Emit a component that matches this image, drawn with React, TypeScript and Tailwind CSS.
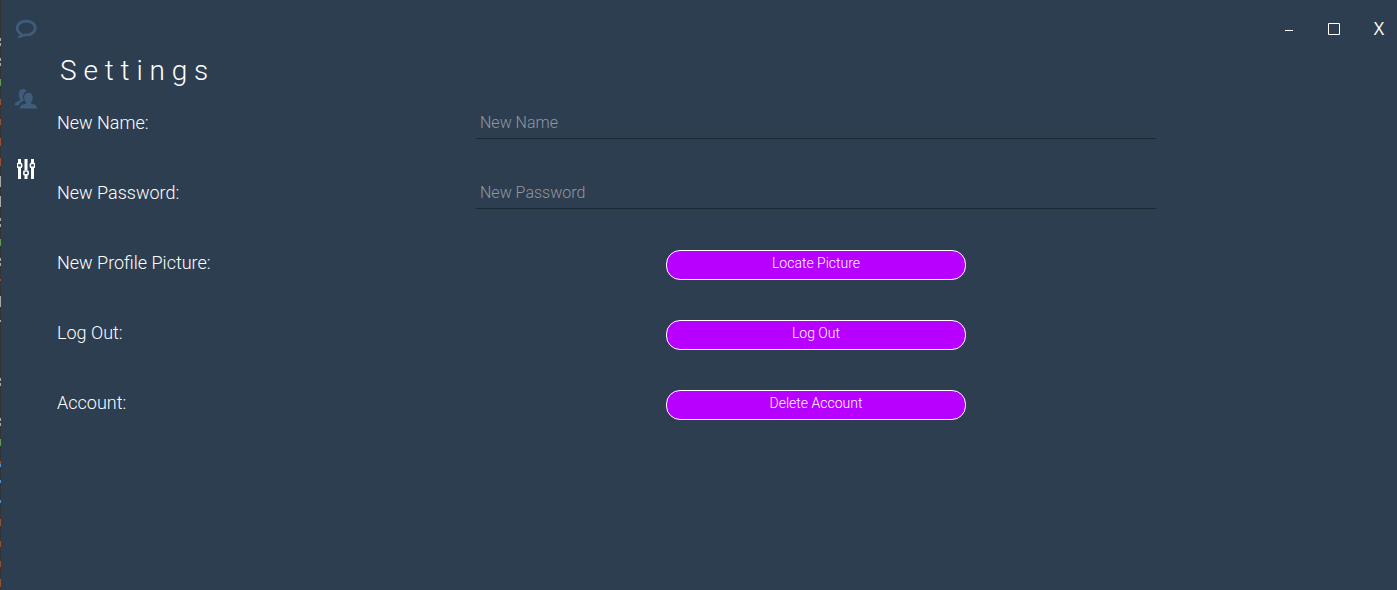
import type { ReactNode } from 'react';

function ChatIcon() {
  return (
    <svg width="22" height="20" viewBox="0 0 22 20" aria-hidden="true">
      <path fill="none" stroke="currentColor" strokeWidth="2.700" d="M6.200 15C3.600 13.700 2.200 11.500 2.200 9.100 2.200 5 6 2.200 11.200 2.200S20.200 5 20.200 9.100 16.400 16 11.200 16c-.9 0-1.600-.1-2.400-.2" />
      <path fill="currentColor" d="M5 13.500l5 2.200c-1.500 2.200-4 3.600-8 3.300 1.700-1.200 2.900-2.800 3-5.500Z" />
    </svg>
  );
}

function PeopleIcon() {
  return (
    <svg width="24" height="22" viewBox="0 0 24 22" fill="currentColor" aria-hidden="true">
      <path d="M9.200 1C11 1 12.200 1.700 12.700 3 10.300 4 9 6 9 8.700c0 1.600.5 2.900 1.200 3.900-2.600.700-4.300 2.200-5.400 4.600H0.500c.3-2.800 2.300-3.800 5.600-4.700v-1.500C5.200 9.600 4.700 7.800 4.800 5.700 4.900 2.800 6.500 1 9.200 1Z" />
      <path d="M14.500 4.800c2.700 0 4.300 1.900 4.300 4.600 0 2-.7 3.800-1.900 4.800v1.300c3.800.700 6.100 1.900 6.400 5H5.700c.3-3.100 2.600-4.300 6.400-5v-1.300c-1.200-1-1.900-2.800-1.900-4.800 0-2.700 1.600-4.600 4.300-4.600Z" />
    </svg>
  );
}

function SlidersIcon() {
  return (
    <svg width="18" height="20" viewBox="0 0 18 20" aria-hidden="true">
      <path fill="none" stroke="currentColor" strokeWidth="3" d="M2.500 0v4M2.500 9v11M9 0v11M9 16v4M15.500 0v4M15.500 9v11" />
      <g fill="none" stroke="currentColor" strokeWidth="1.600">
        <rect x="0.400" y="4.500" width="4.200" height="3.800" rx="0.800" />
        <rect x="6.900" y="12" width="4.200" height="3.800" rx="0.800" />
        <rect x="13.400" y="4.500" width="4.200" height="3.800" rx="0.800" />
      </g>
    </svg>
  );
}

function BackdropEdge() {
  return (
    <svg className="w-px shrink-0 self-stretch bg-[#343434]" aria-hidden="true">
      <path stroke="#a8a8a8" strokeWidth="2" d="M0 38v3M0 43v3M0 58v3M0 63v3M0 176v11M0 196v11M0 218v3M0 224v3M0 258v3M0 263v3M0 296v11M0 320v2M0 378v3M0 383v3M0 418v3M0 423v3" />
      <path stroke="#629a4e" strokeWidth="2" d="M0 79v7M0 239v7M0 439v7" />
      <path stroke="#96502e" strokeWidth="2" d="M0 99v6M0 119v6M0 138v8M0 158v8M0 279v2M0 461v3M0 519v7M0 541v6M0 561v6M0 579v8" />
      <path stroke="#568bc4" strokeWidth="2" d="M0 464v3M0 480v3M0 500v3" />
    </svg>
  );
}

function NavButton({ label, active = false, children }: { label: string; active?: boolean; children: ReactNode }) {
  return (
    <button
      type="button"
      aria-label={label}
      aria-current={active ? 'page' : undefined}
      className={`flex h-10 w-full items-center justify-center ${active ? 'text-white' : 'text-[#3f5c7b]'}`}
    >
      {children}
    </button>
  );
}

const rowClass = 'grid h-[70px] grid-cols-[419fr_680fr_241fr] items-center';
const labelClass = 'pt-0.5 text-lg text-white';

function FieldRow({ id, type, name }: { id: string; type: string; name: string }) {
  return (
    <div className={rowClass}>
      <label htmlFor={id} className={labelClass}>{name}:</label>
      <input
        id={id}
        type={type}
        placeholder={name}
        className="h-[34px] w-full border-b border-[#1b2733] bg-transparent px-1 pt-0.5 text-base text-white outline-none placeholder:text-[#8f98a2]"
      />
    </div>
  );
}

function ActionRow({ id, label, action }: { id: string; label: string; action: string }) {
  return (
    <div className={rowClass}>
      <label htmlFor={id} className={labelClass}>{label}</label>
      <div className="flex justify-center pt-[6px]">
        <button id={id} type="button" className="flex h-[30px] w-[300px] items-center justify-center rounded-[14px] border border-white bg-[#b700ff] pb-1 text-sm text-white">
          {action}
        </button>
      </div>
    </div>
  );
}

export default function App() {
  return (
    <div className="flex min-h-screen bg-[#2d3e50] font-['Roboto',sans-serif] font-light">
      <BackdropEdge />
      <nav aria-label="Main" className="flex w-[50px] shrink-0 flex-col gap-[30px] pt-[9px]">
        <NavButton label="Chat"><ChatIcon /></NavButton>
        <NavButton label="Contacts"><PeopleIcon /></NavButton>
        <NavButton label="Settings" active><SlidersIcon /></NavButton>
      </nav>
      <main className="min-w-0 flex-1">
        <header className="flex h-[87px] items-start justify-between pl-[9px]">
          <h1 className="pt-[55px] text-[28px] leading-8 text-white">S e t t i n g s</h1>
          <div className="flex gap-[9px] pt-[11px] text-white">
            <button type="button" aria-label="Minimize" className="flex h-9 w-9 items-center justify-center">
              <svg width="8" height="12" aria-hidden="true"><path fill="currentColor" d="M0 7h8v1H0z" /></svg>
            </button>
            <button type="button" aria-label="Maximize" className="flex h-9 w-9 items-center justify-center">
              <svg width="12" height="12" aria-hidden="true"><path fill="none" stroke="currentColor" d="M.5.5h11v11H.5z" /></svg>
            </button>
            <button type="button" aria-label="Close" className="flex h-9 w-9 items-center justify-center pb-0.5 font-['Open_Sans',sans-serif] text-lg font-medium">X</button>
          </div>
        </header>
        <form className="pl-1.5" onSubmit={(event) => event.preventDefault()}>
          <FieldRow id="new-name" type="text" name="New Name" />
          <FieldRow id="new-password" type="password" name="New Password" />
          <ActionRow id="picture" label="New Profile Picture:" action="Locate Picture" />
          <ActionRow id="logout" label="Log Out:" action="Log Out" />
          <ActionRow id="account" label="Account:" action="Delete Account" />
        </form>
      </main>
    </div>
  );
}
